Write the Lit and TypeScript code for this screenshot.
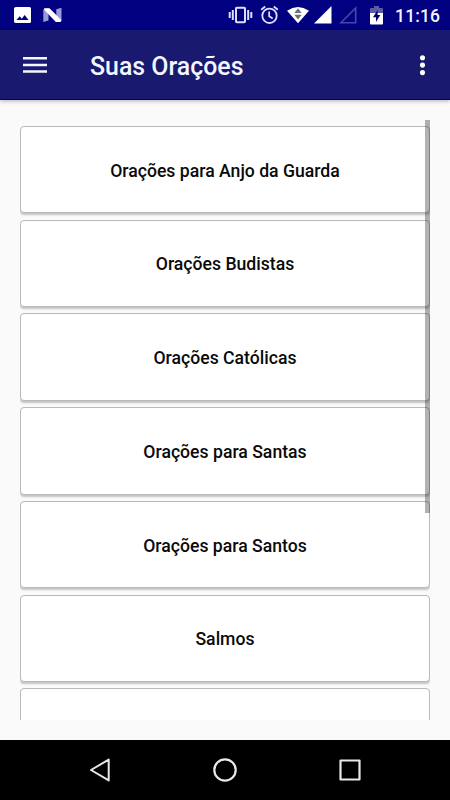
import { LitElement, html, css } from "lit";
import { customElement, property } from "lit/decorators.js";

@customElement("status-bar")
class StatusBar extends LitElement {
  static styles = css`
    :host { display: flex; align-items: center; height: 30px; background: #000080; color: #f4f4ff; box-sizing: border-box; padding: 0 10px 0 13px; }
    svg { display: block; flex: none; }
    .n { margin-left: 10px; }
    .space { flex: 1; }
    .right { display: flex; align-items: center; }
    .alarm { margin-left: 7px; }
    .wifi { margin-left: 8px; }
    .signal { margin-left: 5px; }
    .empty { margin-left: 7px; }
    .battery { margin-left: 13px; }
    .time { width: 57px; text-align: right; font: 500 17.5px/30px Roboto, sans-serif; letter-spacing: 0.1px; padding-top: 1px; box-sizing: border-box; height: 30px; }
  `;
  render() {
    return html`
      <svg width="19" height="30" viewBox="0 0 19 30"><path fill="#fff" fill-rule="evenodd" d="M3 7h13.500q1.500 0 1.500 1.500v13q0 1.500-1.500 1.500h-13.500q-2 0-2-1.500v-13q0-1.500 2-1.500zM3.500 20h12l-3.800-5-2.900 3.700-2.100-2.500z"/></svg>
      <svg class="n" width="21" height="30" viewBox="0 0 21 30"><path fill="#9a9ad8" d="M1.300 9.500l5.200-1.500v12.500l-5.200 1.500zM14.300 9.200l5.200-1.400v12.700l-5.200 1.500z"/><path fill="#fff" d="M2 8.200h5.500l12 12-1 1.800h-4.700L2.500 10z"/></svg>
      <div class="space"></div>
      <div class="right">
        <svg width="25" height="30" viewBox="0 0 25 30" fill="none" stroke="#dedef6" stroke-width="2"><rect x="8" y="7.700" width="9" height="14.600" rx=".8"/><path d="M4.800 10v10M1.700 12v6M20.200 10v10M23.300 12v6"/></svg>
        <svg class="alarm" width="19" height="30" viewBox="0 0 19 30" fill="none" stroke="#dedef6" stroke-width="1.800"><circle cx="9.500" cy="15.800" r="7.200"/><path d="M9.200 11.500v4.800l3.500 2.200M1.200 9.700l4-3.200M17.800 9.700l-4-3.200"/></svg>
        <svg class="wifi" width="22" height="30" viewBox="0 0 22 30"><path fill="#fff" d="M0 10.700Q11 3.500 22 10.700L11 23.300z"/><path fill="#707078" d="M7.300 13h7.400L11 8.200zM7.300 14.700h7.400L11 19.500z"/></svg>
        <svg class="signal" width="18" height="30" viewBox="0 0 18 30"><path fill="#fff" d="M0 23.500L17.500 6v17.500z"/></svg>
        <svg class="empty" width="18" height="30" viewBox="0 0 18 30"><path fill="none" stroke="#4848a6" stroke-width="1.600" d="M2 22.700L16.700 8v14.700z"/></svg>
        <svg class="battery" width="13" height="30" viewBox="0 0 13 30"><path fill="#5b5baa" d="M1 8h3V6h5v2h3q1 0 1 1v5H0V9q0-1 1-1z"/><path fill="#fff" d="M0 13h13v10.500q0 1-1 1H1q-1 0-1-1z"/><path fill="#000070" d="M7.600 10L3 17.200h3V22l4.300-7h-2.700z"/></svg>
        <div class="time">11:16</div>
      </div>`;
  }
}

@customElement("tool-bar")
class ToolBar extends LitElement {
  @property() title = "";
  static styles = css`
    :host { display: flex; align-items: center; height: 70px; box-sizing: border-box; background: #191970; border-bottom: 1px solid #07074f; padding: 0 20px 0 23px; box-shadow: 0 1px 4px rgba(0,0,0,.3); position: relative; }
    svg { display: block; flex: none; }
    .title { flex: 1; margin-left: 43px; padding-top: 5px; font: 500 24.900px/64px Roboto, sans-serif; color: #f3f6ff; white-space: nowrap; }
  `;
  render() {
    return html`
      <svg width="24" height="18" viewBox="0 0 24 18"><path fill="#f3f6ff" d="M0 1h24v2.500H0zM0 7.700h24v2.500H0zM0 14.300h24v2.500H0z"/></svg>
      <div class="title">${this.title}</div>
      <svg width="15" height="22" viewBox="0 0 15 22" fill="#fff"><circle cx="7.500" cy="3.700" r="2.550"/><circle cx="7.500" cy="11.100" r="2.550"/><circle cx="7.500" cy="18.600" r="2.550"/></svg>`;
  }
}

@customElement("nav-bar")
class NavBar extends LitElement {
  static styles = css`
    :host { display: flex; align-items: center; justify-content: center; gap: 95px; height: 60px; background: #000; }
    svg { display: block; }
  `;
  render() {
    return html`
      <svg width="30" height="30" viewBox="0 0 30 30" fill="none" stroke="#e8e8e8" stroke-width="2" stroke-linejoin="round"><path d="M6 15L23.700 4.600v20.800z"/></svg>
      <svg width="30" height="30" viewBox="0 0 30 30" fill="none" stroke="#e8e8e8" stroke-width="2.200"><circle cx="15" cy="15" r="10.700"/></svg>
      <svg width="30" height="30" viewBox="0 0 30 30" fill="none" stroke="#e8e8e8" stroke-width="2.200" stroke-linejoin="round"><rect x="5.500" y="5.500" width="19" height="19"/></svg>`;
  }
}

@customElement("app-root")
class AppRoot extends LitElement {
  private items = [
    "Orações para Anjo da Guarda",
    "Orações Budistas",
    "Orações Católicas",
    "Orações para Santas",
    "Orações para Santos",
    "Salmos",
    "",
  ];
  static styles = css`
    :host { display: flex; flex-direction: column; height: 800px; overflow: hidden; background: #fafafa; }
    .content { flex: 1; min-height: 0; padding: 20px; display: flex; }
    .list { position: relative; flex: 1; overflow: hidden; display: flex; flex-direction: column; gap: 6.250px; padding-top: 5.950px; }
    .card { flex: none; height: 87.500px; box-sizing: border-box; border: 1px solid #b9b9b9; border-radius: 4px; background: #fff; box-shadow: 0 2px 2px rgba(0,0,0,.22); display: flex; align-items: center; justify-content: center; padding-top: 2px; font: 500 17.640px/24px Roboto, sans-serif; color: #0a0a0a; }
    .thumb { position: absolute; top: 0; right: 0; width: 5px; height: 393px; background: rgba(0,0,0,.3); }
  `;
  render() {
    return html`
      <status-bar></status-bar>
      <tool-bar title="Suas Orações"></tool-bar>
      <div class="content">
        <div class="list">
          ${this.items.map((label) => html`<div class="card">${label}</div>`)}
          <div class="thumb"></div>
        </div>
      </div>
      <nav-bar></nav-bar>`;
  }
}
